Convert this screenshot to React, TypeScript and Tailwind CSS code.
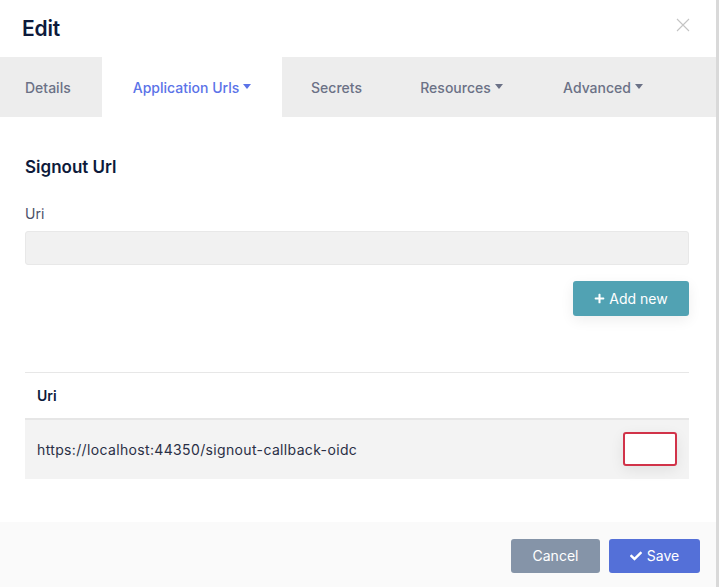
import { FaPlus, FaCheck } from 'react-icons/fa';

const tabs = [
    { label: 'Details', w: 'w-[102px] pl-[25px] justify-start', caret: false },
    { label: 'Application Urls', w: 'w-[180px] justify-center', caret: true, active: true },
    { label: 'Secrets', w: 'w-[109px] justify-center', caret: false },
    { label: 'Resources', w: 'w-[141px] justify-center', caret: true },
    { label: 'Advanced', w: 'w-[142px] justify-center', caret: true },
];

const Caret = () => (
    <svg width="8" height="5" viewBox="0 0 8 5" className="ml-[4px] mt-[-2px]">
        <path d="M0 0 H8 L4 5 Z" fill="currentColor" />
    </svg>
);

const App = () => {
    return (
        <div className="w-[719px] h-[587px] flex bg-[#d9d9d9] font-['Inter',sans-serif]">
            <div className="w-[716px] h-full bg-white flex flex-col">
                <header className="h-[57px] flex items-center justify-between pl-[22px] pr-[26px]">
                    <h2 className="text-[21px] font-semibold text-[#0d1a3b] tracking-[-0.2px]">Edit</h2>
                    <svg width="14" height="14" viewBox="0 0 14 14" className="mt-[-8px]">
                        <path d="M1 1 L13 13 M13 1 L1 13" stroke="#c4c4c4" strokeWidth="1.1" />
                    </svg>
                </header>

                <nav className="h-[60px] bg-[#ededed] flex">
                    {tabs.map((t) => (
                        <div
                            key={t.label}
                            className={`${t.w} flex items-center text-[14px] font-medium ${
                                t.active ? 'bg-white text-[#5b73e8]' : 'text-[#6b7186]'
                            }`}
                        >
                            {t.label}
                            {t.caret && <Caret />}
                        </div>
                    ))}
                </nav>

                <div className="flex-1 px-[25px] pt-[38px] flex flex-col">
                    <h3 className="text-[17px] font-semibold text-[#0d1a3b] leading-[24px]">Signout Url</h3>

                    <label className="mt-[25px] text-[14px] text-[#4a5068] leading-[20px]">Uri</label>
                    <div className="mt-[7px] h-[34px] w-[664px] bg-[#f1f1f1] border border-[#e8e8e8] rounded-[3px]" />

                    <div className="flex justify-end mt-[16px] w-[664px]">
                        <button className="h-[35px] w-[116px] rounded-[3px] bg-[#51a2b3] text-white text-[14px] flex items-center justify-center gap-[4px] shadow-[0_4px_14px_rgba(0,0,0,0.07)]">
                            <FaPlus size={11} />
                            Add new
                        </button>
                    </div>

                    <table className="mt-[56px] w-[664px] text-[14px] border-collapse">
                        <thead>
                            <tr className="border-t border-[#e7e7e7] h-[46px]">
                                <th className="text-left font-semibold text-[#0d1a3b] pl-[12px]">Uri</th>
                                <th />
                            </tr>
                        </thead>
                        <tbody>
                            <tr className="border-t-2 border-[#e6e6e6] bg-[#f3f3f3] h-[60px]">
                                <td className="pl-[12px] text-[#2a2f45] tracking-[0.35px]">https://localhost:44350/signout-callback-oidc</td>
                                <td className="w-[70px] pr-[12px]">
                                    <div className="w-[54px] h-[34px] border-2 border-[#d13349] rounded-[3px] bg-white shadow-[0_4px_14px_rgba(0,0,0,0.08)] ml-auto" />
                                </td>
                            </tr>
                        </tbody>
                    </table>
                </div>

                <footer className="h-[65px] bg-[#fafafa] flex items-center justify-end gap-[9px] pr-[16px] pt-[2px]">
                    <button className="h-[34px] w-[89px] rounded-[3px] bg-[#8594a8] text-white text-[14px]">Cancel</button>
                    <button className="h-[34px] w-[91px] rounded-[3px] bg-[#5470d8] text-white text-[14px] flex items-center justify-center gap-[5px]">
                        <FaCheck size={12} />
                        Save
                    </button>
                </footer>
            </div>
        </div>
    );
};

export default App;
